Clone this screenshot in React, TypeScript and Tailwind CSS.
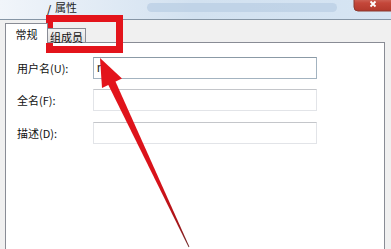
import React from "react";

export default function App() {
  const cjk = "font-['Noto_Sans_CJK_SC','Microsoft_YaHei',sans-serif]";
  return (
    <div className={`relative w-[391px] h-[249px] overflow-hidden bg-[#f0f0f0] flex flex-col ${cjk}`}>
      {/* title bar */}
      <div className="h-[20px] shrink-0 border-b border-[#8595a5] bg-gradient-to-r from-[#f1f5fa] via-[#d2e1f0] to-[#d6e5f3] flex items-start pr-[37px]">
        <span className="mt-[4px] ml-[47px] text-[12px] leading-none text-[#333] font-['DejaVu_Sans',sans-serif]">/</span>
        <span className="mt-[2px] ml-[4px] text-[11px] leading-none text-[#1e1e1e]">属性</span>
        <div className="ml-[70px] mt-[3px] h-[9px] w-[190px] rounded-full bg-[#bcd0e5] opacity-80" />
      </div>

      {/* body */}
      <div className="flex-1 flex flex-col pl-[5px] pr-[6px] pt-[3px]">
        {/* tabs */}
        <div className="h-[20px] flex items-end relative z-10">
          <div className="h-[20px] w-[43px] bg-white border border-b-0 border-[#898c95] flex items-start justify-center pt-[4px]">
            <span className="text-[11px] leading-[12px] text-[#111]">常规</span>
          </div>
          <div className="h-[15px] w-[38px] bg-gradient-to-b from-[#f3f3f3] to-[#e1e1e1] border border-l-0 border-[#898c95] flex items-center justify-center">
            <span className="text-[11px] leading-[12px] text-[#111] mt-[2px]">组成员</span>
          </div>
        </div>
        {/* panel */}
        <div className="flex-1 -mt-px bg-white border border-[#898c95] border-b-0 pl-[11px] pt-[14px] flex flex-col">
          <div className="flex items-center h-[22px]">
            <span className="w-[76px] text-[11px] text-[#111]">用户名(U):</span>
            <div className="w-[224px] h-[22px] border border-[#a3b3c0] border-t-[#8b9aa6] bg-white flex items-center pl-[3px]">
              <span className="text-[12px] text-[#222] font-['Liberation_Sans',sans-serif]">r</span>
            </div>
          </div>
          <div className="flex items-center h-[22px] mt-[10px]">
            <span className="w-[76px] text-[11px] text-[#111]">全名(F):</span>
            <div className="w-[224px] h-[22px] border border-[#e2e4e8] border-t-[#c4c6ca] bg-white" />
          </div>
          <div className="flex items-center h-[22px] mt-[11px]">
            <span className="w-[76px] text-[11px] text-[#111]">描述(D):</span>
            <div className="w-[224px] h-[22px] border border-[#e2e4e8] border-t-[#c4c6ca] bg-white" />
          </div>
        </div>
      </div>

      {/* red highlight rectangle */}
      <div className="absolute left-[46px] top-[15px] w-[77px] h-[38px] border-[7px] border-[#e3141b]" />

      {/* red arrow + window close button drawing */}
      <svg className="absolute left-0 top-0 pointer-events-none" width="391" height="249" viewBox="0 0 391 249">
        <defs>
          <linearGradient id="shaft" x1="110" y1="83" x2="189" y2="247" gradientUnits="userSpaceOnUse">
            <stop offset="0" stopColor="#e3141b" />
            <stop offset="0.6" stopColor="#d8121a" />
            <stop offset="0.85" stopColor="#a81418" />
            <stop offset="1" stopColor="#6e2a2a" />
          </linearGradient>
          <linearGradient id="closebg" x1="0" y1="0" x2="0" y2="1">
            <stop offset="0" stopColor="#d9857a" />
            <stop offset="0.5" stopColor="#c4473a" />
            <stop offset="1" stopColor="#b3392c" />
          </linearGradient>
        </defs>
        <polygon points="100,58 122,78.6 102,88" fill="#e3141b" />
        <polygon points="107.6,83.4 114.8,80 189.4,246.8 188.6,247.2" fill="url(#shaft)" />
        <rect x="354" y="-5" width="42" height="16" rx="4" fill="url(#closebg)" stroke="#8a3a30" strokeWidth="1" />
        <path d="M370.5 1.5 L375.5 6.5 M375.5 1.5 L370.5 6.5" stroke="#ffffff" strokeWidth="1.8" />
      </svg>
    </div>
  );
}
